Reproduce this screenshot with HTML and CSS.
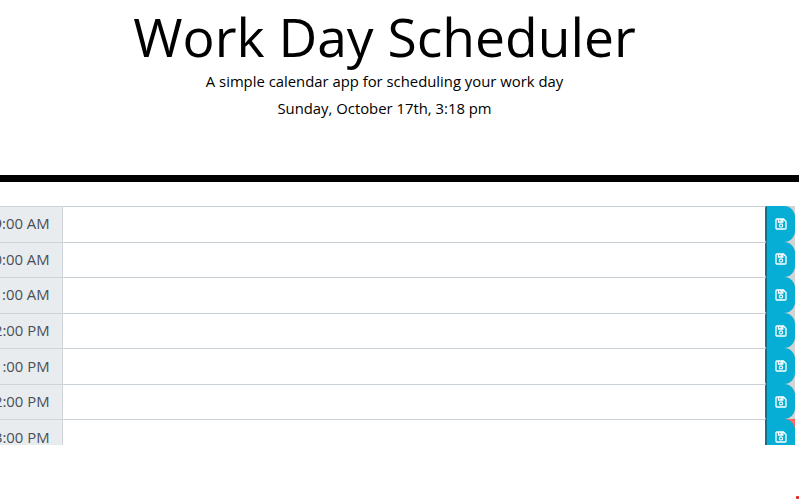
FILE: index.html
```html
<!DOCTYPE html>
<html lang="en">
<head>
<meta charset="utf-8">
<title>Work Day Scheduler</title>
<link rel="stylesheet" href="styles.css">
</head>
<body>
<svg class="symbols"><symbol id="save" viewBox="0 0 12 12"><path d="M1.8 1h6.7L11 3.5v6.7a.8.8 0 0 1-.8.8H1.8a.8.8 0 0 1-.8-.8V1.8A.8.8 0 0 1 1.8 1zM3.5 1v3h4.3V1M6.2 1.5v2" fill="none" stroke="#fff" stroke-width="1.3"/><circle cx="6" cy="7.4" r="1.6" fill="none" stroke="#fff" stroke-width="1.2"/></symbol></svg>
<header class="jumbotron">
<h1>Work Day Scheduler</h1>
<p>A simple calendar app for scheduling your work day</p>
<p>Sunday, October 17th, 3:18 pm</p>
</header>
<main class="schedule">
<div class="row"><span class="hour">9:00 AM</span><div class="entry"></div><div class="save"><button><svg><use href="#save"/></svg></button></div></div>
<div class="row"><span class="hour">10:00 AM</span><div class="entry"></div><div class="save"><button><svg><use href="#save"/></svg></button></div></div>
<div class="row"><span class="hour">11:00 AM</span><div class="entry"></div><div class="save"><button><svg><use href="#save"/></svg></button></div></div>
<div class="row"><span class="hour">12:00 PM</span><div class="entry"></div><div class="save"><button><svg><use href="#save"/></svg></button></div></div>
<div class="row"><span class="hour">1:00 PM</span><div class="entry"></div><div class="save"><button><svg><use href="#save"/></svg></button></div></div>
<div class="row"><span class="hour">2:00 PM</span><div class="entry"></div><div class="save"><button><svg><use href="#save"/></svg></button></div></div>
<div class="row"><span class="hour">3:00 PM</span><div class="entry"></div><div class="save present"><button><svg><use href="#save"/></svg></button></div></div>
</main>
<span class="marker"></span>
</body>
</html>
```
FILE: styles.css
```css
* { box-sizing: border-box; }
body { margin: 0; height: 500px; overflow: hidden; background: #fff; color: #000; font-family: "Open Sans", sans-serif; }
.symbols { display: none; }
.jumbotron { height: 182px; width: 799px; border-bottom: 7px solid #000; padding: 4px 30px 0 0; text-align: center; }
h1 { margin: 0 0 1px; font-size: 53.4px; font-weight: 400; line-height: 65px; }
p { margin: 0; font-size: 14.85px; line-height: 22px; }
p + p { margin-top: 4.5px; }
.schedule { margin-top: 24px; height: 239px; width: 795px; overflow: hidden; }
.row { display: flex; height: 35.58px; }
.hour { width: 62.6px; flex: none; display: flex; justify-content: flex-end; align-items: center; padding: 0 12px 2px 0; white-space: nowrap; background: #e9ecef; color: #495057; font-size: 14.9px; font-weight: 370; border: 1px solid #ced4da; border-width: 1px 1px 0 0; }
.entry { flex: 1; border-top: 1px solid #c9d0d6; }
.save { width: 30px; background: #d3d3d3; }
.present { background: #ff6961; }
button { display: flex; align-items: center; justify-content: center; width: 100%; height: 100%; padding: 0; border: 0; border-left: 2px solid #176f86; border-radius: 2px 11px 11px 2px; background: #06aed5; }
button svg { width: 12px; height: 12px; }
.marker { position: absolute; left: 796px; top: 496px; width: 3px; height: 3px; border-radius: 1px; background: #e8201c; }
```
